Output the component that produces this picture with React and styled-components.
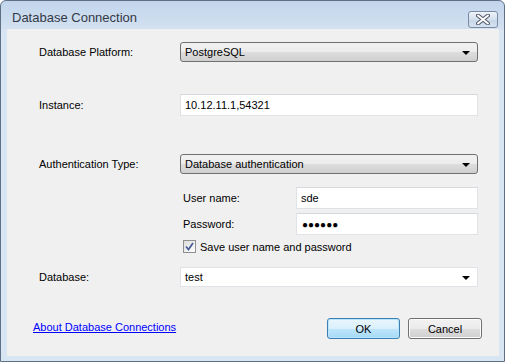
import React from "react";
import styled, { createGlobalStyle } from "styled-components";

const Global = createGlobalStyle`
  html, body { margin: 0; padding: 0; background: #ffffff; }
  body { font-family: "Liberation Sans", Arial, sans-serif; font-size: 11px; color: #000; }
`;

const Window = styled.div`
  width: 505px;
  height: 362px;
  box-sizing: border-box;
  border: 1px solid #5f6f84;
  border-radius: 6px 6px 0 0;
  background: linear-gradient(#c2d5ec 0px, #d3e1f1 28px, #d8e5f3 29px, #d8e5f3 100%);
  display: flex;
  flex-direction: column;
  overflow: hidden;
`;

const TitleBar = styled.div`
  height: 28px;
  display: flex;
  align-items: center;
  justify-content: space-between;
  padding: 0 6px 0 11px;
`;

const Title = styled.span`
  font-size: 13px;
  color: #333a44;
  margin-top: 4px;
`;

const CloseButton = styled.div`
  width: 30px;
  height: 17px;
  box-sizing: border-box;
  margin-top: 8px;
  border: 1px solid #7a8aa3;
  border-radius: 3px;
  background: linear-gradient(#eef3f9, #d4e0ee 50%, #c6d5e8 51%, #d6e2f0);
  display: flex;
  align-items: center;
  justify-content: center;
`;

const Client = styled.div`
  flex: 1;
  margin: 0 5px 5px 6px;
  background: #f0f0f0;
  padding: 13px 17px 0 32px;
  display: flex;
  flex-direction: column;
`;

const Row = styled.div`
  display: flex;
  align-items: center;
  margin-top: ${(p) => p.$top || 0}px;
  padding-left: ${(p) => p.$indent || 0}px;
`;

const Label = styled.span`
  width: ${(p) => p.$width || 141}px;
  flex-shrink: 0;
`;

const Combo = styled.div`
  width: 298px;
  height: 20px;
  box-sizing: border-box;
  border: 1px solid #707070;
  border-radius: 3px;
  background: linear-gradient(#f2f2f2 0%, #ebebeb 50%, #dddddd 51%, #cfcfcf 100%);
  display: flex;
  align-items: center;
  justify-content: space-between;
  padding: 0 7px 0 4px;
`;

const EditCombo = styled(Combo)`
  border: 1px solid #dfe3e8;
  border-radius: 0;
  background: #ffffff;
  height: 20px;
`;

const TextBox = styled.div`
  width: ${(p) => p.$width || 298}px;
  height: 22px;
  box-sizing: border-box;
  border: 1px solid #dfe3e8;
  border-top-color: #d5d9de;
  background: #ffffff;
  display: flex;
  align-items: center;
  padding: 0 4px;
`;

const Dots = styled.span`
  font-size: 10px;
  letter-spacing: 0px;
  padding-left: 1px;
`;

const Arrow = styled.span`
  width: 0;
  height: 0;
  border-left: 4px solid transparent;
  border-right: 4px solid transparent;
  border-top: 4px solid #000;
  margin-top: 1px;
`;

const CheckRow = styled.label`
  display: flex;
  align-items: center;
  gap: 4px;
`;

const Box = styled.span`
  width: 13px;
  height: 13px;
  box-sizing: border-box;
  border: 1px solid #8e8f8f;
  background: linear-gradient(135deg, #dcdcdc, #ffffff);
  display: flex;
  align-items: center;
  justify-content: center;
`;

const Footer = styled.div`
  display: flex;
  align-items: center;
  justify-content: space-between;
  margin-top: 31px;
  margin-left: -6px;
`;

const Link = styled.a`
  color: #0000ff;
  text-decoration: underline;
  margin-top: -4px;
`;

const Buttons = styled.div`
  display: flex;
  gap: 8px;
`;

const Button = styled.button`
  width: ${(p) => p.$width || 73}px;
  height: 21px;
  box-sizing: border-box;
  font: inherit;
  color: #000;
  border: 1px solid ${(p) => (p.$default ? "#3c7fb1" : "#707070")};
  border-radius: 3px;
  background: ${(p) =>
    p.$default
      ? "linear-gradient(#eaf6fd 0%, #d9f0fc 50%, #bee6fd 51%, #a7d9f5 100%)"
      : "linear-gradient(#f2f2f2 0%, #ebebeb 50%, #dddddd 51%, #cfcfcf 100%)"};
  box-shadow: ${(p) => (p.$default ? "inset 0 0 0 1px #b8e5fc" : "inset 0 0 0 1px #fcfcfc")};
  padding: 0;
`;

const CloseIcon = () => (
  <svg width="14" height="11" viewBox="0 0 14 11">
    <path d="M2 1.5 L12 9.5 M12 1.5 L2 9.5" stroke="#535b68" strokeWidth="4" strokeLinecap="round" />
    <path d="M2 1.5 L12 9.5 M12 1.5 L2 9.5" stroke="#ffffff" strokeWidth="2" strokeLinecap="round" />
  </svg>
);

const Check = () => (
  <svg width="9" height="9" viewBox="0 0 9 9">
    <path d="M1 4.5 L3.5 7.5 L8 1" fill="none" stroke="#4a5f97" strokeWidth="1.8" />
  </svg>
);

export default function App() {
  return (
    <>
      <Global />
      <Window>
        <TitleBar>
          <Title>Database Connection</Title>
          <CloseButton>
            <CloseIcon />
          </CloseButton>
        </TitleBar>
        <Client>
          <Row>
            <Label>Database Platform:</Label>
            <Combo>
              <span>PostgreSQL</span>
              <Arrow />
            </Combo>
          </Row>
          <Row $top={32}>
            <Label>Instance:</Label>
            <TextBox>10.12.11.1,54321</TextBox>
          </Row>
          <Row $top={38}>
            <Label>Authentication Type:</Label>
            <Combo>
              <span>Database authentication</span>
              <Arrow />
            </Combo>
          </Row>
          <Row $top={13} $indent={144}>
            <Label $width={113}>User name:</Label>
            <TextBox $width={182}>sde</TextBox>
          </Row>
          <Row $top={4} $indent={144}>
            <Label $width={113}>Password:</Label>
            <TextBox $width={182}>
              <Dots>●●●●●●</Dots>
            </TextBox>
          </Row>
          <Row $top={5} $indent={144}>
            <CheckRow>
              <Box>
                <Check />
              </Box>
              <span>Save user name and password</span>
            </CheckRow>
          </Row>
          <Row $top={14}>
            <Label>Database:</Label>
            <EditCombo>
              <span>test</span>
              <Arrow />
            </EditCombo>
          </Row>
          <Footer>
            <Link href="#">About Database Connections</Link>
            <Buttons>
              <Button $default>OK</Button>
              <Button $width={74}>Cancel</Button>
            </Buttons>
          </Footer>
        </Client>
      </Window>
    </>
  );
}
